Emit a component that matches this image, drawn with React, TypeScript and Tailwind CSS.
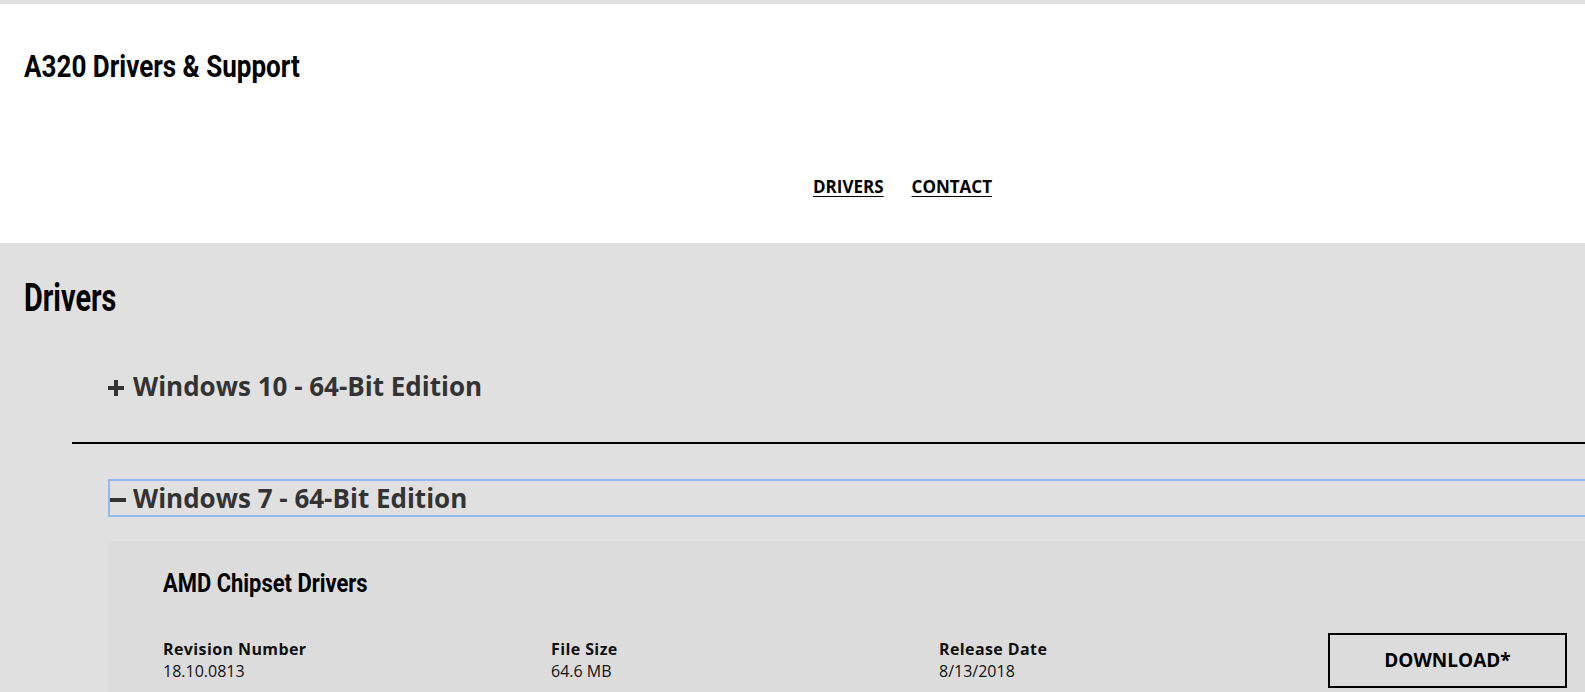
import React from "react";

const cond: React.CSSProperties = { fontFamily: 'Roboto, "Open Sans", sans-serif' };

export default function App() {
  return (
    <div className="w-full h-[692px] overflow-hidden bg-[#e0e0e0]" style={{ fontFamily: '"Open Sans", "Noto Sans", sans-serif' }}>
      <div className="w-[1805px]">
        <div className="h-[4px] bg-[#e0e0e0]" />
        <header className="bg-white h-[239px] flex flex-col">
          <div className="pl-6 h-[40px] mt-[42px] flex items-center">
            <h1 className="text-[31px] font-bold text-black leading-none whitespace-nowrap origin-left scale-x-[0.84]" style={cond}>A320 Drivers &amp; Support</h1>
          </div>
          <nav className="mt-[87px] h-[28px] flex justify-center items-center gap-[28px] text-[17px] font-bold text-black">
            <a className="underline underline-offset-[3px]">DRIVERS</a>
            <a className="underline underline-offset-[3px]">CONTACT</a>
          </nav>
        </header>
        <main>
          <div className="pl-6 h-[40px] mt-[35px] flex items-center">
            <h2 className="text-[38.5px] font-bold text-black leading-none whitespace-nowrap origin-left scale-x-[0.75]" style={cond}>Drivers</h2>
          </div>
          <div className="ml-[108px] mt-[50px] h-[36px] flex items-center text-[#333] text-[26px] font-bold">
            <span className="relative w-[25px] h-[16px] shrink-0 mt-[4px]">
              <span className="absolute left-0 top-[6px] w-[16px] h-[4px] bg-[#333]" />
              <span className="absolute left-[6px] top-0 w-[4px] h-[16px] bg-[#333]" />
            </span>
            <span className="leading-none">Windows 10 - 64-Bit Edition</span>
          </div>
          <div className="ml-[72px] mt-[38px] h-[2px] bg-black" />
          <div className="ml-[108px] mt-[35px] h-[38px] border-2 border-[#94b8f0] flex items-center text-[#333] text-[26px] font-bold">
            <span className="relative w-[23px] h-[4px] shrink-0 mt-[4px]">
              <span className="absolute left-0 top-0 w-[16px] h-[4px] bg-[#333]" />
            </span>
            <span className="leading-none">Windows 7 - 64-Bit Edition</span>
          </div>
          <section className="ml-[108px] mt-[24px] bg-[#dcdcdc] pl-[55px] pt-[27px] h-[200px]">
            <div className="h-[32px] flex items-center">
              <h3 className="text-[25.5px] font-bold text-black leading-none whitespace-nowrap origin-left scale-x-[0.86]" style={cond}>AMD Chipset Drivers</h3>
            </div>
            <div className="mt-[33px] grid grid-cols-[388px_388px_389px_240px] items-start text-[16px] text-[#111]">
              <div className="pt-[5px]">
                <div className="font-bold leading-[22px] tracking-[0.4px]">Revision Number</div>
                <div className="leading-[22px]">18.10.0813</div>
              </div>
              <div className="pt-[5px]">
                <div className="font-bold leading-[22px] tracking-[0.4px]">File Size</div>
                <div className="leading-[22px]">64.6 MB</div>
              </div>
              <div className="pt-[5px]">
                <div className="font-bold leading-[22px] tracking-[0.4px]">Release Date</div>
                <div className="leading-[22px]">8/13/2018</div>
              </div>
              <div>
                <button className="w-[239px] h-[55px] border-2 border-black text-[19px] font-bold text-black">DOWNLOAD*</button>
              </div>
            </div>
          </section>
        </main>
      </div>
    </div>
  );
}
